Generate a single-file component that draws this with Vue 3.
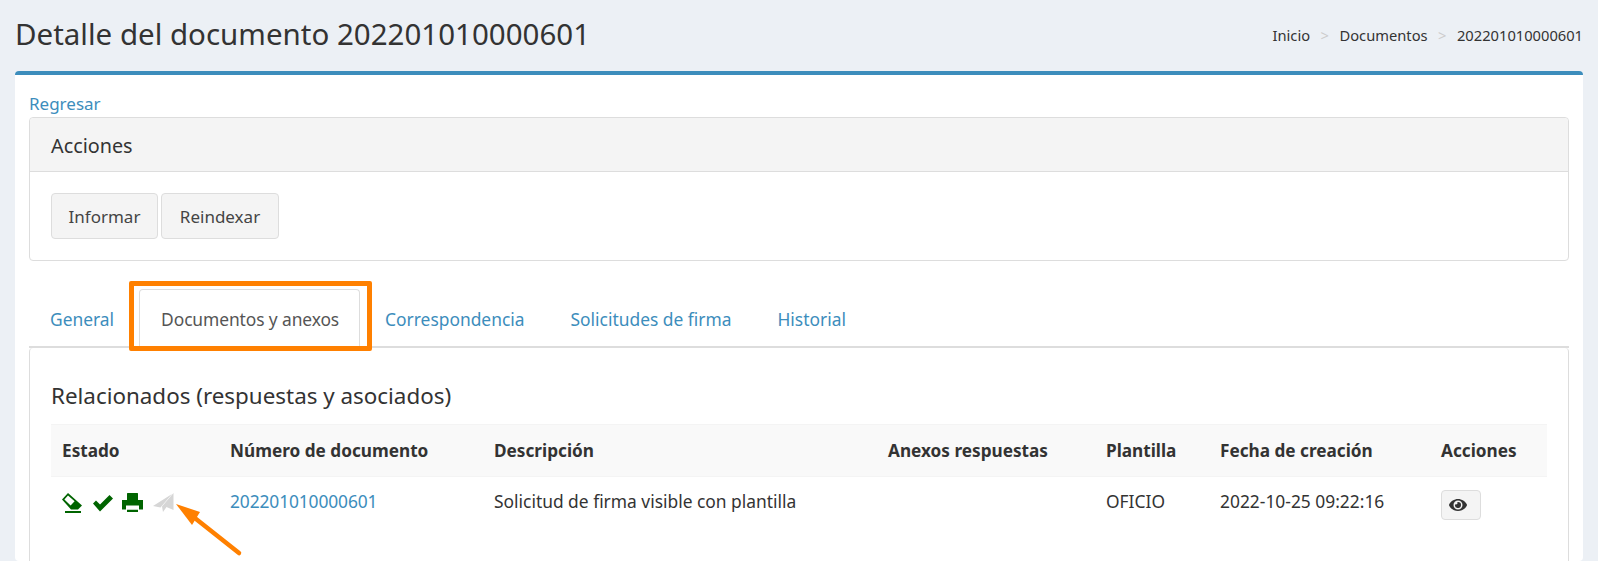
<template>
  <div class="page">
    <header class="top">
      <h1>Detalle del documento 202201010000601</h1>
      <nav class="crumbs">
        <span>Inicio</span><i>&gt;</i><span>Documentos</span><i>&gt;</i><span>202201010000601</span>
      </nav>
    </header>

    <section class="box">
      <a class="link back">Regresar</a>
      <div class="card">
        <div class="card-head">Acciones</div>
        <div class="card-body">
          <button class="btn b1">Informar</button>
          <button class="btn b2">Reindexar</button>
        </div>
      </div>

      <ul class="tabs">
        <li v-for="t in tabs" :key="t" :class="{ active: t === 'Documentos y anexos' }">{{ t }}</li>
      </ul>

      <div class="pane">
        <h2>Relacionados (respuestas y asociados)</h2>
        <table>
          <colgroup>
            <col v-for="w in cols" :key="w" :style="{ width: w + 'px' }" />
          </colgroup>
          <thead>
            <tr>
              <th v-for="h in heads" :key="h">{{ h }}</th>
            </tr>
          </thead>
          <tbody>
            <tr>
              <td class="state">
                <svg class="ic i1" viewBox="0 0 20 20" width="20" height="20">
                  <path fill="#006400" fill-rule="evenodd" d="M6 0 L0 6.5 L9 16.5 H16 L20 12.5 Z M6 2.4 L2.4 6.4 L8.6 12.6 L12.6 8.2 Z" />
                  <rect x="3" y="18" width="16" height="2" fill="#006400" />
                </svg>
                <svg class="ic i2" viewBox="0 0 20 18" width="20" height="18">
                  <path fill="#006400" d="M0 9.5 L3 6.5 L7 10.5 L16.5 1 L20 4.5 L7 17.5 Z" />
                </svg>
                <svg class="ic i3" viewBox="0 0 21 19" width="21" height="19">
                  <path fill="#006400" d="M5.5 0 H15.5 L16 .5 V7 H21 V16.5 H17 V12.5 H4 V16.5 H0 V7 H5 V.5 Z M5 16.8 H16 V19 H5 Z" />
                </svg>
                <svg class="ic i4" viewBox="0 0 21 19" width="21" height="19">
                  <path fill="#d6d6d6" d="M20.5 0 V17 L13.5 14 L10 19 L9 13.5 Z M19 1 L0 13 L7.5 14.5 Z" />
                </svg>
              </td>
              <td><a class="link num">202201010000601</a></td>
              <td>Solicitud de firma visible con plantilla</td>
              <td></td>
              <td>OFICIO</td>
              <td>2022-10-25 09:22:16</td>
              <td>
                <button class="eye">
                  <svg viewBox="0 50 576 412" width="18" height="14">
                    <path fill="#333" d="M572.52 241.4C518.29 135.59 410.93 64 288 64S57.68 135.64 3.48 241.41a32.35 32.35 0 0 0 0 29.19C57.71 376.41 165.07 448 288 448s230.32-71.64 284.52-177.41a32.35 32.35 0 0 0 0-29.19zM288 400a144 144 0 1 1 144-144 143.93 143.93 0 0 1-144 144zm0-240a95.31 95.31 0 0 0-25.31 3.79 47.85 47.85 0 0 1-66.9 66.9A95.78 95.78 0 1 0 288 160z" />
                  </svg>
                </button>
              </td>
            </tr>
          </tbody>
        </table>
      </div>

      <div class="mark"></div>
      <svg class="arrow" viewBox="0 0 70 54" width="70" height="54">
        <path fill="none" stroke="#ff8000" stroke-width="4.5" stroke-linecap="round" d="M64 49 L16 11" />
        <path fill="#ff8000" d="M1 0 L25 8 L17 21 Z" />
      </svg>
    </section>
  </div>
</template>

<script setup>
const tabs = ['General', 'Documentos y anexos', 'Correspondencia', 'Solicitudes de firma', 'Historial']
const heads = ['Estado', 'Número de documento', 'Descripción', 'Anexos respuestas', 'Plantilla', 'Fecha de creación', 'Acciones']
const cols = [168, 264, 394, 218, 114, 221, 117]
</script>

<style>
html, body { margin: 0; height: 561px; overflow: hidden; background: #ecf0f5; }
</style>

<style scoped>
.page {
  height: 561px;
  overflow: hidden;
  background: #ecf0f5;
  color: #333;
  font-family: "Noto Sans", sans-serif;
  font-size: 17.4px;
  padding: 0 15px;
  box-sizing: border-box;
}
.top {
  display: flex;
  justify-content: space-between;
  align-items: center;
  height: 71px;
  padding-bottom: 5px;
  box-sizing: border-box;
}
h1 { margin: 0; font-size: 29.5px; font-weight: 400; }
.crumbs { display: flex; align-items: center; font-size: 14.7px; color: #333; margin-top: 3px; }
.crumbs i { font-style: normal; color: #ccc; margin: 0 10.5px; }
.box {
  position: relative;
  background: #fff;
  border-top: 4px solid #3c8dbc;
  border-radius: 4px;
  padding: 15px 14px 0;
  height: 490px;
  box-sizing: border-box;
}
.link { color: #3c8dbc; text-decoration: none; }
.back { display: block; height: 27px; line-height: 27px; font-size: 17px; }
.num { letter-spacing: -0.12px; }
.card { border: 1px solid #ddd; border-radius: 4px; height: 144px; box-sizing: border-box; }
.card-head {
  height: 54px;
  line-height: 56px;
  padding-left: 21px;
  background: #f4f4f4;
  border-bottom: 1px solid #ddd;
  border-radius: 4px 4px 0 0;
  font-size: 19.8px;
  box-sizing: border-box;
}
.card-body { display: flex; gap: 3px; padding: 21px 21px; }
.btn {
  height: 46px;
  padding: 0;
  font: inherit;
  font-size: 17px;
  color: #444;
  background: #f4f4f4;
  border: 1px solid #ddd;
  border-radius: 4px;
}
.b1 { width: 107px; }
.b2 { width: 118px; }
.tabs {
  display: flex;
  gap: 4px;
  list-style: none;
  margin: 28px 0 0;
  padding: 0;
  height: 57px;
  align-items: stretch;
  border-bottom: 2px solid #ddd;
  color: #3c8dbc;
  line-height: 24px;
}
.tabs li { padding: 18px 21px 0; }
.tabs li.active {
  padding: 17px 20px 0 21px;
  letter-spacing: -0.1px;
  color: #555;
  background: #fff;
  border: 1px solid #ddd;
  border-bottom: 0;
  border-radius: 4px 4px 0 0;
  margin-bottom: -2px;
}
.pane {
  border: 1px solid #ddd;
  border-top: 0;
  border-radius: 4px;
  padding: 0 21px;
  height: 240px;
  box-sizing: border-box;
}
h2 { margin: 0; padding-top: 33px; height: 76px; box-sizing: border-box; font-size: 22.4px; font-weight: 400; line-height: 30px; }
table { border-collapse: collapse; table-layout: fixed; width: 1496px; }
th {
  background: #f9f9f9;
  border-top: 1px solid #f4f4f4;
  border-bottom: 1px solid #f4f4f4;
  text-align: left;
  padding: 0 11px;
  height: 51px;
  font-weight: 700;
  font-size: 17.2px;
}
td { padding: 10px 11px; height: 50px; box-sizing: border-box; vertical-align: top; line-height: 28px; }
.state { display: flex; align-items: flex-start; padding-top: 16px; }
.ic { flex: none; display: block; }
.i2 { margin: 1px 0 0 11px; }
.i3 { margin-left: 9px; }
.i4 { margin-left: 10px; }
.eye {
  width: 40px;
  height: 30px;
  margin-top: 3px;
  background: #f4f4f4;
  border: 1px solid #ddd;
  border-radius: 4px;
  display: flex;
  align-items: center;
  padding: 0 0 0 7px;
}
.mark {
  position: absolute;
  left: 114px;
  top: 206px;
  width: 243px;
  height: 70px;
  border: 5px solid #ff8000;
  border-radius: 2px;
  box-sizing: border-box;
}
.arrow { position: absolute; left: 160px; top: 429px; }
</style>
